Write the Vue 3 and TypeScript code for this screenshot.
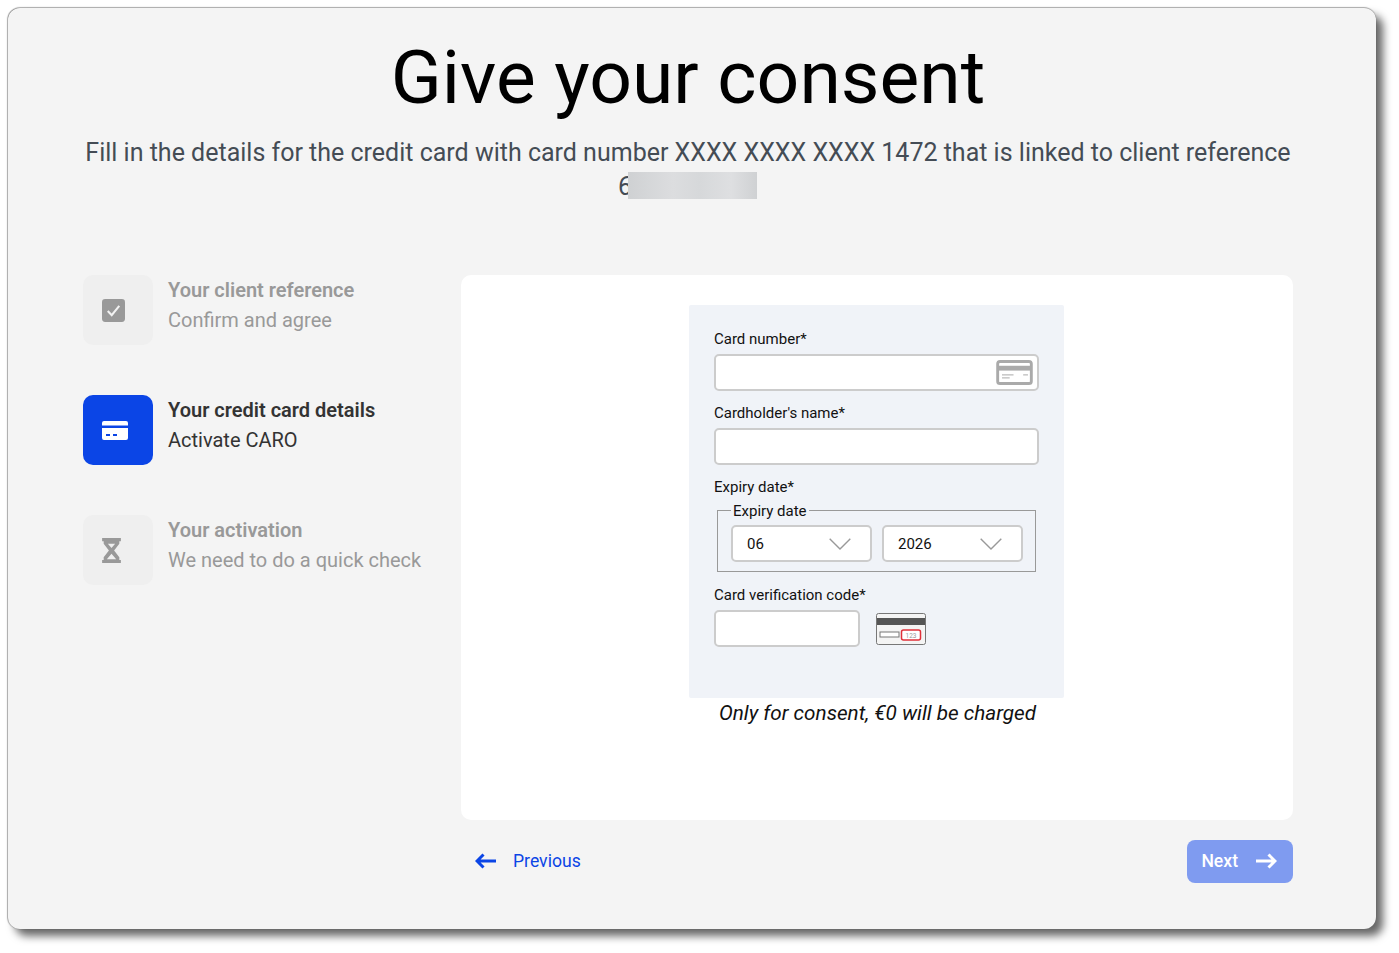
<script setup lang="ts">
interface Step { title: string; sub: string; state: 'done' | 'active' | 'todo'; icon: 'check' | 'card' | 'hourglass' }
const steps: Step[] = [
  { title: 'Your client reference', sub: 'Confirm and agree', state: 'done', icon: 'check' },
  { title: 'Your credit card details', sub: 'Activate CARO', state: 'active', icon: 'card' },
  { title: 'Your activation', sub: 'We need to do a quick check', state: 'todo', icon: 'hourglass' },
]
</script>

<template>
  <div class="page">
    <main class="sheet">
      <header class="head">
        <h1>Give your consent</h1>
        <p>Fill in the details for the credit card with card number XXXX XXXX XXXX 1472 that is linked to client reference <span class="ref">6</span><span class="blur"></span></p>
      </header>

      <div class="body">
        <aside class="steps">
          <div v-for="s in steps" :key="s.title" class="step" :class="s.state">
            <div class="badge">
              <svg v-if="s.icon === 'check'" width="23" height="23" viewBox="1 1 22 22">
                <rect x="1" y="1" width="22" height="22" rx="3" fill="#999" />
                <path d="M6.500 12.500l3.800 4L17.500 7.500" fill="none" stroke="#f2f2f2" stroke-width="2" />
              </svg>
              <svg v-else-if="s.icon === 'card'" width="26" height="19" viewBox="1 1.500 26 19">
                <path d="M3 1.500h22a2 2 0 0 1 2 2V6H1V3.500a2 2 0 0 1 2-2zM1 8.500h26v10a2 2 0 0 1-2 2H3a2 2 0 0 1-2-2z" fill="#fff" />
                <path d="M5 15.500h4M12 15.500h4" stroke="#0b45e6" stroke-width="1.800" />
              </svg>
              <svg v-else width="19" height="25" viewBox="1 1 18 24">
                <path d="M1 1h18v3h-1.500v2.500L12.500 13l5 6.500V22H19v3H1v-3h1.500v-2.500l5-6.500-5-6.500V4H1z" fill="#999" />
                <path d="M6.500 6.500h7L10 10.500zM10 16l4.500 5.500h-9z" fill="#efefef" />
              </svg>
            </div>
            <div class="step-text">
              <strong>{{ s.title }}</strong>
              <span>{{ s.sub }}</span>
            </div>
          </div>
        </aside>

        <section class="main">
          <div class="panel">
            <form class="form" @submit.prevent>
              <label class="lbl">Card number*</label>
              <div class="input with-icon">
                <svg class="card-ico" width="37" height="25" viewBox="0 0 38 26">
                  <rect x="1.500" y="1.500" width="35" height="23" rx="2.500" fill="#fff" stroke="#aaa" stroke-width="3" />
                  <rect x="2" y="6" width="34" height="5" fill="#aaa" />
                  <path d="M6 15.500h12M6 18.500h8M28 15.500h5" stroke="#bbb" stroke-width="1.300" />
                </svg>
              </div>
              <label class="lbl second">Cardholder's name*</label>
              <div class="input"></div>
              <label class="lbl second">Expiry date*</label>
              <fieldset class="expiry">
                <legend>Expiry date</legend>
                <div class="selects">
                  <div class="select"><span>06</span><svg width="22" height="12" viewBox="0 0 22 12"><path d="M.700.700L11 11 21.300.700" fill="none" stroke="#999" stroke-width="1.400" /></svg></div>
                  <div class="select"><span>2026</span><svg width="22" height="12" viewBox="0 0 22 12"><path d="M.700.700L11 11 21.300.700" fill="none" stroke="#999" stroke-width="1.400" /></svg></div>
                </div>
              </fieldset>
              <label class="lbl cvc">Card verification code*</label>
              <div class="cvc-row">
                <div class="input short"></div>
                <svg width="50" height="32" viewBox="0 0 50 32">
                  <rect x=".500" y=".500" width="49" height="31" rx="2" fill="#f4f4f4" stroke="#777" />
                  <rect x="1" y="5" width="48" height="7" fill="#555" />
                  <rect x="4" y="19" width="19" height="5" fill="#fff" stroke="#777" />
                  <rect x="25.500" y="17" width="19" height="10" rx="2" fill="#fff" stroke="#e0303a" stroke-width="1.500" />
                  <text x="35" y="24.500" font-size="6.500" text-anchor="middle" fill="#999" font-family="Roboto, sans-serif">123</text>
                </svg>
              </div>
            </form>
            <p class="note">Only for consent, €0 will be charged</p>
          </div>

          <nav class="actions">
            <button type="button" class="prev">
              <svg width="22" height="16" viewBox="0 0 22 16"><path d="M21 8H2.500M8.500 1.500L2 8l6.500 6.500" fill="none" stroke="#0b45e6" stroke-width="3" /></svg>
              Previous
            </button>
            <button type="button" class="next">
              Next
              <svg width="22" height="16" viewBox="0 0 22 16"><path d="M1 8h18.500M13.500 1.500L20 8l-6.500 6.500" fill="none" stroke="#fff" stroke-width="3" /></svg>
            </button>
          </nav>
        </section>
      </div>
    </main>
  </div>
</template>

<style scoped>
.page {
  width: 1399px;
  height: 953px;
  box-sizing: border-box;
  padding: 8px 23px 23px 8px;
  font-family: Roboto, "Liberation Sans", sans-serif;
  background: #fff;
  overflow: hidden;
}
.sheet {
  height: 921px;
  box-sizing: border-box;
  padding: 0 83px 0 75px;
  background: #f4f4f4;
  border-radius: 12px;
  box-shadow: 0 -1px 1px rgba(0,0,0,.3), -1px 0 1px rgba(0,0,0,.3), 7px 7px 8px rgba(0,0,0,.6);
}
.head { text-align: center; color: #444c55; }
.head h1 {
  margin: 0;
  padding-top: 25px;
  font-size: 75px;
  line-height: 89px;
  font-weight: 400;
  color: #000;
}
.head p {
  margin: 14px 0 0;
  font-size: 25px;
  line-height: 34px;
}
.blur {
  display: inline-block;
  width: 129px;
  height: 27px;
  margin: 0 1px 0 -4px;
  vertical-align: -4px;
  background: linear-gradient(90deg, #cfd1d3, #dcdddf 35%, #d6d8da 55%, #dedfe1 80%, #cfd1d3);
}
.body { display: flex; margin-top: 71px; }
.steps { width: 378px; flex: none; display: flex; flex-direction: column; gap: 50px; }
.step { display: flex; gap: 15px; height: 70px; }
.badge {
  width: 70px;
  height: 70px;
  box-sizing: border-box;
  padding-left: 19px;
  flex: none;
  border-radius: 10px;
  background: #efefef;
  display: flex;
  align-items: center;
}
.active .badge { background: #0b45e6; }
.step-text { display: flex; flex-direction: column; font-size: 20px; line-height: 30px; color: #999; }
.step-text strong { font-weight: 600; }
.active .step-text { color: #333; }
.main { flex: 1; min-width: 0; }
.panel {
  height: 545px;
  box-sizing: border-box;
  padding: 30px 1px 0 0;
  background: #fff;
  border-radius: 10px;
  display: flex;
  flex-direction: column;
  align-items: center;
}
.form {
  width: 375px;
  height: 393px;
  box-sizing: border-box;
  padding: 24px 25px 0;
  background: #f0f3f8;
  border-radius: 2px;
  color: #111;
  font-size: 15px;
}
.lbl { display: block; line-height: 20px; height: 20px; margin-bottom: 5px; }
.lbl.second { margin-top: 12px; }
.input {
  width: 325px;
  height: 37px;
  box-sizing: border-box;
  background: #fff;
  border: 2px solid #ccc;
  border-radius: 5px;
  position: relative;
}
.input.short { width: 146px; }
.card-ico { position: absolute; right: 4px; top: 4px; }
.expiry {
  width: 319px;
  height: 72px;
  box-sizing: border-box;
  margin: -2px 0 0 3px;
  padding: 0 11px 0 13px;
  border: 1px solid #999;
  min-width: 0;
}
.expiry legend { margin-left: 0; padding: 0 2px; font-size: 15px; line-height: 20px; position: relative; top: 1px; }
.selects { display: flex; gap: 10px; margin-top: 5px; }
.select {
  width: 141px;
  height: 37px;
  flex: none;
  box-sizing: border-box;
  background: #fff;
  border: 2px solid #ccc;
  border-radius: 5px;
  display: flex;
  align-items: center;
  justify-content: space-between;
  padding: 0 19px 0 14px;
  font-size: 15px;
}
.lbl.cvc { margin-top: 13px; }
.cvc-row { display: flex; align-items: center; gap: 16px; margin-top: 0; }
.note {
  margin: 3px 0 0 2px;
  font-size: 20.7px;
  line-height: 24px;
  font-style: italic;
  color: #111;
}
.actions { display: flex; justify-content: space-between; margin-top: 20px; }
.actions button {
  height: 43px;
  border: 0;
  font-family: inherit;
  font-size: 17.6px;
  display: flex;
  align-items: center;
  cursor: pointer;
}
.actions .prev { background: none; color: #0b45e6; gap: 16px; padding: 0 14px 2px; }
.actions .next {
  background: #7f9bf0;
  color: #fff;
  font-weight: 500;
  border-radius: 8px;
  gap: 17px;
  padding: 0 16px 2px 14px;
}
</style>

<style>
html, body { margin: 0; background: #fff; }
</style>
